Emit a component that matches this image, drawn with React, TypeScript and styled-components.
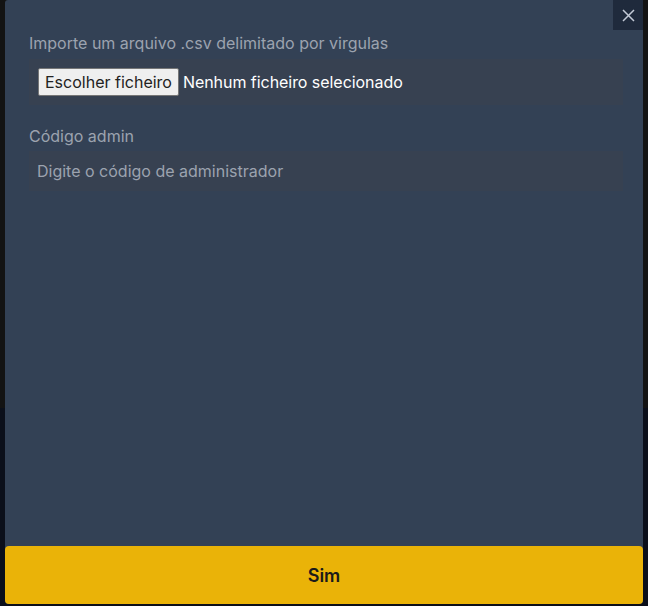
import React from "react";
import styled, { createGlobalStyle } from "styled-components";

const Global = createGlobalStyle`
  html, body { margin: 0; padding: 0; background: #0d1017; }
  body { font-family: Inter, "Noto Sans", sans-serif; }
  * { box-sizing: border-box; }
`;

const Backdrop = styled.div`
  width: 648px;
  height: 606px;
  padding: 0 5px 2px 5px;
  background: linear-gradient(#131313 0 408px, #0b0f1a 408px);
  display: flex;
`;

const Modal = styled.div`
  position: relative;
  flex: 1;
  background: #334155;
  border-radius: 3px 3px 4px 4px;
  display: flex;
  flex-direction: column;
`;

const CloseButton = styled.button`
  position: absolute;
  top: 0;
  right: 0;
  width: 30px;
  height: 30px;
  border: none;
  padding: 0;
  background: #1f2a3c;
  color: #c3cad6;
  display: flex;
  align-items: center;
  justify-content: center;
  cursor: pointer;
`;

const Body = styled.div`
  flex: 1;
  padding: 33px 20px 0 24px;
  display: flex;
  flex-direction: column;
`;

const Label = styled.label<{ $top?: number }>`
  display: block;
  margin-top: ${(p) => p.$top ?? 0}px;
  font-size: 16px;
  line-height: 20px;
  color: #9ca3af;
`;

const FileBox = styled.div`
  margin-top: 6px;
  height: 46px;
  padding: 9px;
  background: #374151;
  display: flex;
  align-items: center;
  gap: 4px;
`;

const FileButton = styled.span`
  height: 28px;
  padding: 0 6px;
  background: #efefef;
  border: 1px solid #767676;
  border-radius: 2px;
  font-size: 16px;
  color: #222;
  display: flex;
  align-items: center;
`;

const FileName = styled.span`
  font-size: 16px;
  letter-spacing: -0.05px;
  color: #ffffff;
`;

const TextInput = styled.input`
  margin-top: 5px;
  height: 40px;
  width: 100%;
  border: none;
  outline: none;
  padding: 0 8px;
  background: #374151;
  font-family: inherit;
  font-size: 16px;
  color: #e5e7eb;
  &::placeholder { color: #9ca3af; }
`;

const Submit = styled.button`
  height: 58px;
  border: none;
  border-radius: 4px;
  background: #eab308;
  font-family: inherit;
  font-size: 18px;
  font-weight: 600;
  color: #1a1a1a;
  cursor: pointer;
`;

export default function App() {
  return (
    <>
      <Global />
      <Backdrop>
        <Modal>
          <CloseButton aria-label="Fechar">
            <svg width="13" height="13" viewBox="0 0 13 13" fill="none" stroke="currentColor" strokeWidth="1.5">
              <path d="M1 1L12 12M12 1L1 12" />
            </svg>
          </CloseButton>
          <Body>
            <Label>Importe um arquivo .csv delimitado por virgulas</Label>
            <FileBox>
              <FileButton>Escolher ficheiro</FileButton>
              <FileName>Nenhum ficheiro selecionado</FileName>
            </FileBox>
            <Label $top={21}>Código admin</Label>
            <TextInput placeholder="Digite o código de administrador" />
          </Body>
          <Submit>Sim</Submit>
        </Modal>
      </Backdrop>
    </>
  );
}
